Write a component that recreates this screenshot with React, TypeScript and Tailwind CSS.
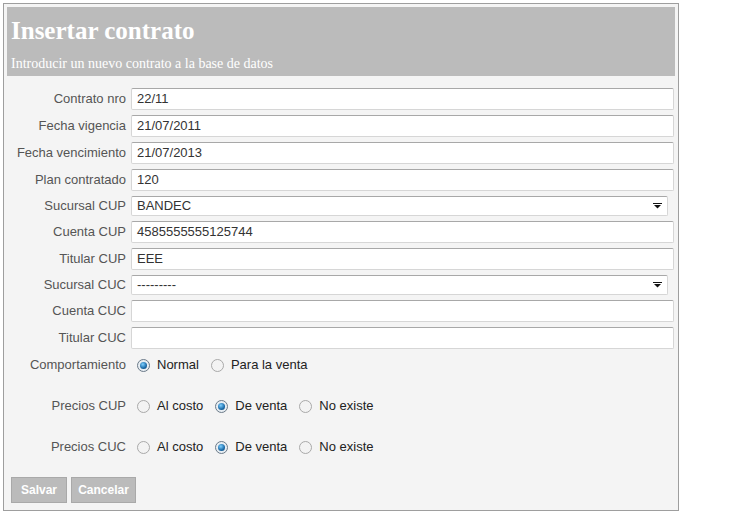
import React from 'react';

const sans = { fontFamily: 'Arial, "Liberation Sans", sans-serif' };

function Label({ children }: { children: React.ReactNode }) {
  return <div className="w-[119px] shrink-0 text-right text-[13px] text-[#555]">{children}</div>;
}

function TextRow({ label, value }: { label: string; value?: string }) {
  return (
    <div className="flex items-center gap-[5px] h-[22px] mb-[5px]">
      <Label>{label}</Label>
      <div className="h-[22px] w-[543px] rounded-[2px] border border-[#d6d6d6] border-t-[#a8a8a8] bg-white px-[5px] flex items-center text-[13px] text-[#333]">
        {value}
      </div>
    </div>
  );
}

function SelectRow({ label, value }: { label: string; value: string }) {
  return (
    <div className="flex items-center gap-[5px] h-[20px] mb-[5px]">
      <Label>{label}</Label>
      <div className="h-[20px] w-[537px] rounded-[2px] border border-[#d6d6d6] border-t-[#a8a8a8] bg-white pl-[5px] pr-[4px] flex items-center justify-between text-[13px] text-[#333]">
        <span>{value}</span>
        <svg width="9" height="6" viewBox="0 0 9 6" className="mr-[1px]">
          <rect x="0" y="0" width="9" height="1" fill="#111" />
          <path d="M1 2 H8 L4.5 5.5 Z" fill="#111" />
        </svg>
      </div>
    </div>
  );
}

function Radio({ checked, text }: { checked?: boolean; text: string }) {
  return (
    <div className="flex items-center">
      <span
        className={
          'ml-[6px] flex h-[13px] w-[13px] items-center justify-center rounded-full border ' +
          (checked ? 'border-[#6b7a88] bg-[#e8eef3]' : 'border-[#a9a9a9] bg-[#f3f3f3]')
        }
      >
        {checked && <span className="h-[7px] w-[7px] rounded-full bg-[radial-gradient(circle_at_40%_35%,#7fd0ff,#1a6aa8_60%,#0b3e66)]" />}
      </span>
      <span className="ml-[7px] mr-[6px] text-[13px] text-[#222]">{text}</span>
    </div>
  );
}

function RadioRow({ label, options, mb }: { label: string; options: { t: string; c?: boolean }[]; mb: string }) {
  return (
    <div className={'flex items-center gap-[5px] h-[16px] ' + mb}>
      <Label>{label}</Label>
      <div className="flex items-center">
        {options.map((o) => (
          <Radio key={o.t} text={o.t} checked={o.c} />
        ))}
      </div>
    </div>
  );
}

export default function App() {
  return (
    <div className="min-h-[514px] w-[754px] bg-white pl-[3px] pt-[3px]" style={sans}>
      <div className="w-[676px] border border-[#9e9e9e] bg-[#f4f4f4] p-[3px] pb-[7px]">
        <div className="h-[69px] bg-[#bbbbbb] px-[4px] pt-[9px] text-white" style={{ fontFamily: '"Liberation Serif", "Times New Roman", serif' }}>
          <h1 className="text-[25px] font-bold leading-[30px]">Insertar contrato</h1>
          <p className="mt-[10px] text-[14px] leading-[16px]">Introducir un nuevo contrato a la base de datos</p>
        </div>

        <div className="pt-[12px]">
          <TextRow label="Contrato nro" value="22/11" />
          <TextRow label="Fecha vigencia" value="21/07/2011" />
          <TextRow label="Fecha vencimiento" value="21/07/2013" />
          <TextRow label="Plan contratado" value="120" />
          <SelectRow label="Sucursal CUP" value="BANDEC" />
          <TextRow label="Cuenta CUP" value="4585555555125744" />
          <TextRow label="Titular CUP" value="EEE" />
          <SelectRow label="Sucursal CUC" value="---------" />
          <TextRow label="Cuenta CUC" />
          <TextRow label="Titular CUC" />

          <div className="pt-[3px]">
            <RadioRow
              label="Comportamiento"
              mb="mb-[25px]"
              options={[{ t: 'Normal', c: true }, { t: 'Para la venta' }]}
            />
            <RadioRow
              label="Precios CUP"
              mb="mb-[25px]"
              options={[{ t: 'Al costo' }, { t: 'De venta', c: true }, { t: 'No existe' }]}
            />
            <RadioRow
              label="Precios CUC"
              mb="mb-[22px]"
              options={[{ t: 'Al costo' }, { t: 'De venta', c: true }, { t: 'No existe' }]}
            />
          </div>

          <div className="flex gap-[4px] pl-[4px]">
            <button className="h-[26px] w-[56px] border border-[#a9a9a9] bg-[#bbbbbb] text-[12px] font-bold text-white">Salvar</button>
            <button className="h-[26px] w-[65px] border border-[#a9a9a9] bg-[#bbbbbb] text-[12px] font-bold text-white">Cancelar</button>
          </div>
        </div>
      </div>
    </div>
  );
}
